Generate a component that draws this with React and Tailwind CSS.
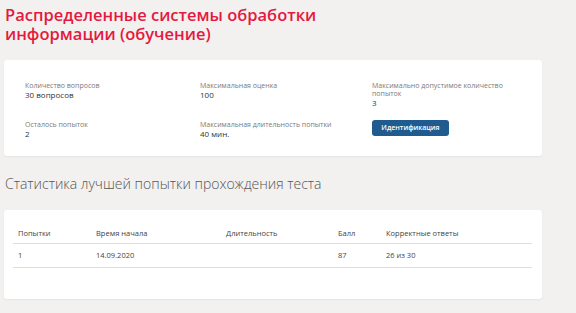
import React from 'react';

const info = [
  { label: 'Количество вопросов', value: '30 вопросов' },
  { label: 'Максимальная оценка', value: '100' },
  { label: 'Максимально допустимое количество попыток', value: '3' },
  { label: 'Осталось попыток', value: '2' },
  { label: 'Максимальная длительность попытки', value: '40 мин.' },
];

export default function App() {
  return (
    <div className="w-[576px] h-[313px] bg-[#f2f1f0] overflow-hidden" style={{ fontFamily: '"Open Sans", sans-serif' }}>
      <h1 className="pl-[5px] pt-[5px] text-[16.5px] leading-[19px] font-semibold text-[#e5193f] w-[400px]">
        Распределенные системы обработки информации (обучение)
      </h1>

      {/* карточка с параметрами */}
      <div className="ml-[4px] mt-[17px] w-[538px] h-[96px] bg-white rounded-[3px] shadow-[0_1px_2px_rgba(0,0,0,0.06)] pl-[21px] pt-[22px] grid grid-cols-[175px_172px_150px] content-start gap-y-[14px]">
        {info.map((it) => (
          <div key={it.label}>
            <div className="text-[7px] leading-[8px] text-[#7a7a7a]">{it.label}</div>
            <div className="text-[8px] leading-[9px] text-[#333]">{it.value}</div>
          </div>
        ))}
        <div className="-mt-[9px]">
          <button className="h-[16px] w-[77px] rounded-[3px] bg-[#1f5b8f] text-white text-[7px] font-semibold">
            Идентификация
          </button>
        </div>
      </div>

      <h2 className="pl-[5px] mt-[20px] text-[14px] leading-[16px] font-light text-[#555]">
        Статистика лучшей попытки прохождения теста
      </h2>

      {/* таблица */}
      <div className="ml-[4px] mt-[18px] w-[538px] h-[89px] bg-white rounded-[3px] shadow-[0_1px_2px_rgba(0,0,0,0.06)] pt-[14px] pl-[9px]">
        <div className="w-[519px] text-[7.5px] text-[#444]">
          <div className="flex h-[20px] items-center border-b border-[#dedede]">
            <div className="w-[83px] pl-[5px]">Попытки</div>
            <div className="w-[130px]">Время начала</div>
            <div className="w-[112px]">Длительность</div>
            <div className="w-[48px]">Балл</div>
            <div>Корректные ответы</div>
          </div>
          <div className="flex h-[24px] items-center border-b border-[#dedede]">
            <div className="w-[83px] pl-[5px]">1</div>
            <div className="w-[130px]">14.09.2020</div>
            <div className="w-[112px]"></div>
            <div className="w-[48px]">87</div>
            <div>26 из 30</div>
          </div>
        </div>
      </div>
    </div>
  );
}
